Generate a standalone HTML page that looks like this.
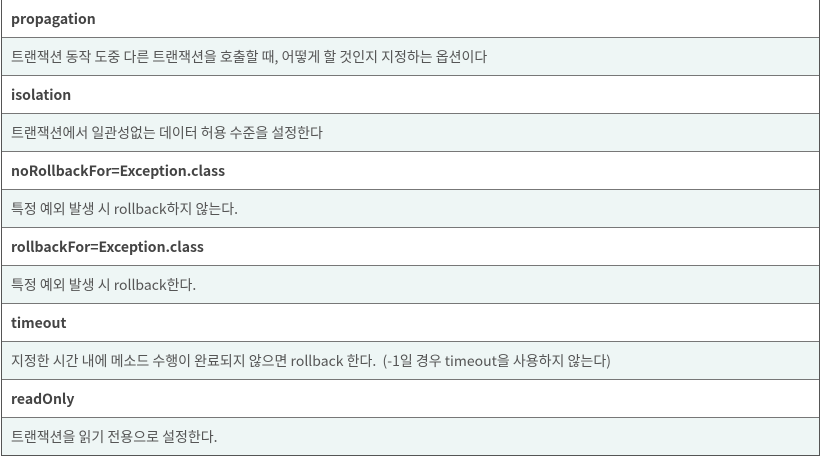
<!DOCTYPE html>
<html><head><meta charset="utf-8"><style>
body{margin:0;width:822px;height:457px;overflow:hidden;background:#fff;font-family:"Noto Sans CJK KR","Liberation Sans",sans-serif;}
.t{position:absolute;left:1px;top:-1px;width:817px;border:1px solid #555;border-top:1px solid #777;}
.r{height:37px;border-top:1px solid #777;line-height:38px;padding-left:9px;color:#555;white-space:nowrap;}
.r:first-child{border-top:none;height:37px;}
.h{font-weight:bold;font-size:14px;background:#fff;color:#444;}
.b{font-size:14px;background:#eef6f5;color:#555;}
</style></head><body>
<div class="t">
<div class="r h">propagation</div>
<div class="r b">트랜잭션 동작 도중 다른 트랜잭션을 호출할 때, 어떻게 할 것인지 지정하는 옵션이다</div>
<div class="r h">isolation</div>
<div class="r b">트랜잭션에서 일관성없는 데이터 허용 수준을 설정한다</div>
<div class="r h">noRollbackFor=Exception.class</div>
<div class="r b">특정 예외 발생 시 rollback하지 않는다.</div>
<div class="r h">rollbackFor=Exception.class</div>
<div class="r b">특정 예외 발생 시 rollback한다.</div>
<div class="r h">timeout</div>
<div class="r b">지정한 시간 내에 메소드 수행이 완료되지 않으면 rollback 한다.&nbsp; (-1일 경우 timeout을 사용하지 않는다)</div>
<div class="r h">readOnly</div>
<div class="r b">트랜잭션을 읽기 전용으로 설정한다.</div>
</div>
</body></html>
